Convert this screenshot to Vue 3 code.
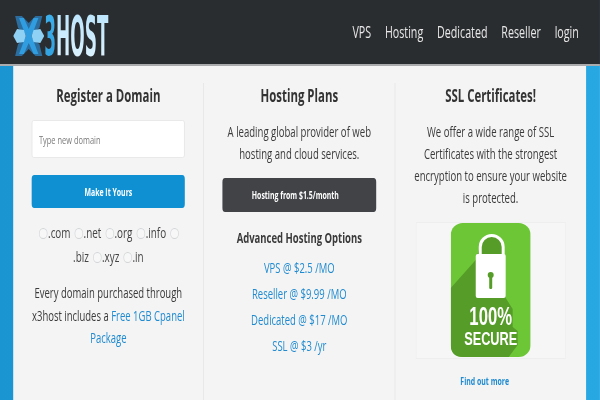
<script setup>
const nav = ['VPS', 'Hosting', 'Dedicated', 'Reseller', 'login'];
const tlds = ['.com', '.net', '.org', '.info', '.biz', '.xyz', '.in'];
const plans = ['VPS @ $2.5 /MO', 'Reseller @ $9.99 /MO', 'Dedicated @ $17 /MO', 'SSL @ $3 /yr'];
</script>

<template>
  <div class="viewport">
    <div class="page">
      <header class="top">
        <a class="logo">
          <svg class="logo__mark" viewBox="0 0 32 44" preserveAspectRatio="none">
            <path d="M2 2 L9 2 L16 9 L23 2 L30 2 L27 14 L16 22 L5 14Z" fill="#2c6d9e" />
            <path d="M5 30 L16 22 L27 30 L30 42 L23 42 L16 35 L9 42 L2 42Z" fill="#2c6d9e" />
            <path d="M6 4 L11 4 L16 15 L21 4 L26 4 L19 22 L26 40 L21 40 L16 29 L11 40 L6 40 L13 22Z" fill="#2f9de0" />
            <path d="M0 22 L4 15 L11 16 L13 22 L11 28 L4 29Z" fill="#8fd0f5" />
            <path d="M32 22 L28 15 L21 16 L19 22 L21 28 L28 29Z" fill="#8fd0f5" />
          </svg>
          <span class="logo__text"><span class="logo__three">3</span><span class="logo__host">HOST</span></span>
        </a>
        <nav class="top__nav">
          <a v-for="item in nav" :key="item">{{ item }}</a>
        </nav>
      </header>

      <main class="content">
        <section class="col">
          <h2>Register a Domain</h2>
          <input class="domain" type="text" placeholder="Type new domain" />
          <button class="btn btn--blue">Make It Yours</button>
          <div class="tlds">
            <template v-for="t in tlds" :key="t"><input type="radio" name="tld" />{{ t + ' ' }}</template>
          </div>
          <p class="note">Every domain purchased through x3host includes a <a>Free 1GB Cpanel Package</a></p>
        </section>

        <section class="col">
          <h2>Hosting Plans</h2>
          <p class="lead">A leading global provider of web hosting and cloud services.</p>
          <button class="btn btn--dark">Hosting from $1.5/month</button>
          <h3>Advanced Hosting Options</h3>
          <ul class="plans">
            <li v-for="p in plans" :key="p"><a>{{ p }}</a></li>
          </ul>
        </section>

        <section class="col">
          <h2>SSL Certificates!</h2>
          <p class="lead">We offer a wide range of SSL Certificates with the strongest encryption to ensure your website is protected.</p>
          <div class="badge-card">
            <svg class="badge" viewBox="0 0 80 134" preserveAspectRatio="none">
              <rect width="80" height="134" rx="12" fill="#6cc636" />
              <path d="M0 65 L25 37 L29 24 L51 24 L55 75 L62 86 L62 104 L67 108 L67 122 L58 134 L12 134 Q0 134 0 122Z" fill="#569c28" />
              <path d="M29.5 33 L29.5 24 A11.5 11.5 0 0 1 52.5 24 L52.5 33" fill="#569c28" stroke="#fff" stroke-width="3" />
              <rect x="25" y="31" width="30" height="44" rx="2" fill="#fff" />
              <circle cx="40" cy="52" r="3" fill="#569c28" />
              <rect x="38.5" y="52" width="3" height="14" rx="1.2" fill="#569c28" />
              <text transform="translate(40 102) scale(0.67 1)" text-anchor="middle" class="badge__big">100%</text>
              <text transform="translate(40 122) scale(0.71 1)" text-anchor="middle" class="badge__small">SECURE</text>
            </svg>
          </div>
          <a class="more">Find out more</a>
        </section>
      </main>
    </div>
  </div>
</template>

<style>
html, body { margin: 0; overflow: hidden; }
</style>

<style scoped>
.viewport {
  width: 600px;
  height: 400px;
  overflow: hidden;
}

/* the whole page is squeezed sideways like the reference */
.page {
  width: 909px;
  height: 400px;
  transform: scaleX(0.66);
  transform-origin: left top;
  font-family: "Open Sans", "Liberation Sans", sans-serif;
  color: #3a3a3a;
  background: linear-gradient(90deg, #1b94d2, #27a8e3);
  display: flex;
  flex-direction: column;
}

.top {
  height: 66px;
  flex: none;
  box-sizing: border-box;
  background: #2a2d30;
  border-bottom: 2px solid #a9abac;
  display: flex;
  justify-content: space-between;
  align-items: center;
  padding: 0 32px 0 20px;
}

.logo {
  display: flex;
  align-items: center;
  margin-top: 8px;
}

.logo__mark {
  width: 47px;
  height: 44px;
}

.logo__text {
  display: inline-block;
  width: 97px;
  font: 700 56px/1 "DejaVu Sans", sans-serif;
  transform: scaleX(0.46);
  transform-origin: left center;
  white-space: nowrap;
}

.logo__three {
  background: linear-gradient(#3fb2ee, #2f9fdd);
  -webkit-background-clip: text;
  background-clip: text;
  color: transparent;
}

.logo__host {
  background: linear-gradient(#b5e3fc, #e2f4fe);
  -webkit-background-clip: text;
  background-clip: text;
  color: transparent;
}

.top__nav {
  display: flex;
  gap: 21px;
  font-size: 16.2px;
}

.top__nav a { color: #e8e8e8; }

.content {
  flex: 1;
  margin: 0 21px 0 20px;
  background: #f4f4f4;
  display: grid;
  grid-template-columns: repeat(3, 1fr);
  padding-top: 17px;
  min-height: 0;
}

.col {
  padding: 0 28px;
  text-align: center;
  border-right: 1px solid #e2e2e2;
}

.col:last-child { border-right: none; }

h2 {
  margin: 0;
  font-size: 17.3px;
  line-height: 26px;
  font-weight: 700;
  color: #333;
}

h3 {
  margin: 15px 0 0;
  font-size: 14.4px;
  line-height: 22px;
  font-weight: 700;
  color: #3a3a3a;
}

.domain {
  display: block;
  box-sizing: border-box;
  width: 100%;
  height: 38px;
  margin-top: 11px;
  padding: 0 10px;
  border: 1px solid #e6e6e6;
  border-radius: 3px;
  background: #fff;
  font: 11.3px "Open Sans", sans-serif;
}

.domain::placeholder { color: #7a7a7a; }

.btn {
  display: block;
  width: 100%;
  border: none;
  border-radius: 4px;
  color: #fff;
  font: 700 10.5px "Open Sans", sans-serif;
}

.btn--blue {
  height: 33px;
  margin-top: 17px;
  background: #0f90d2;
}

.btn--dark {
  height: 34px;
  margin-top: 13px;
  background: #414347;
  padding-right: 18px;
}

.tlds {
  margin-top: 12px;
  font-size: 15px;
  line-height: 24px;
  color: #444;
}

.tlds input {
  appearance: none;
  width: 13px;
  height: 11px;
  margin: 0 1px 0 2px;
  vertical-align: -1px;
  border: 1px solid #d2d5d8;
  border-radius: 50%;
  background: #f7f7f7;
}

.note {
  margin: 14px -3px 0;
  font-size: 14.4px;
  line-height: 22.5px;
  color: #3a3a3a;
}

a { color: #1f8ad0; }

.lead {
  margin: 12px 0 0;
  font-size: 14.5px;
  line-height: 22px;
  color: #3a3a3a;
}

.plans {
  list-style: none;
  margin: 6px 0 0;
  padding: 0;
  font-size: 14.4px;
  line-height: 26px;
}

.badge-card {
  margin: 13px 3px 0;
  height: 135px;
  background: #f6f6f6;
  border: 1px solid #eeeeee;
  display: flex;
  justify-content: center;
}

.badge {
  width: 121px;
  height: 134px;
}

.badge__big {
  font: 700 25px "Liberation Sans", sans-serif;
  fill: #fff;
}

.badge__small {
  font: 700 18px "Liberation Sans", sans-serif;
  fill: #fff;
}

.more {
  display: block;
  margin-top: 15px;
  padding-right: 18px;
  font-size: 10.5px;
  font-weight: 700;
}
</style>
